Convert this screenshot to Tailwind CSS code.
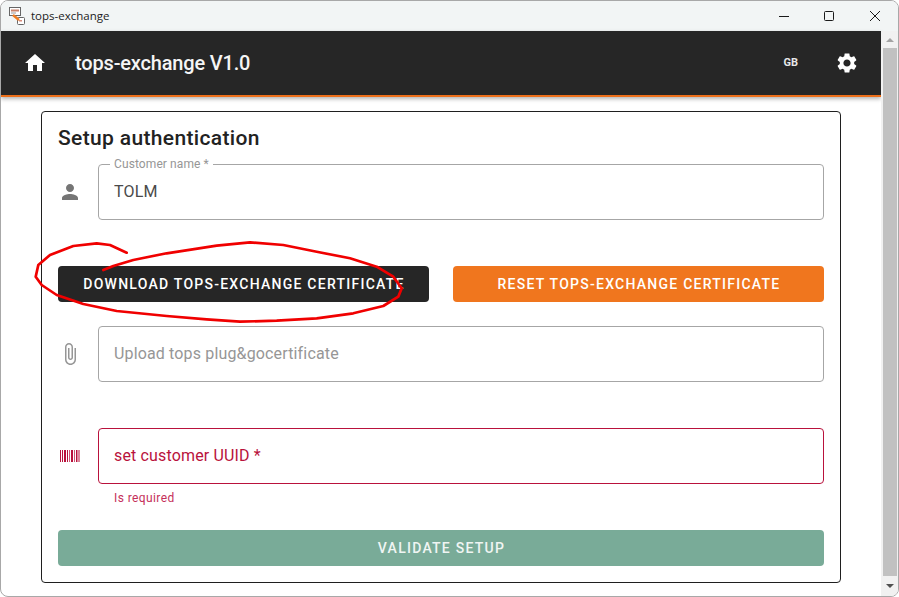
<!DOCTYPE html>
<html lang="en">
<head>
    <meta charset="UTF-8">
    <meta name="viewport" content="width=device-width, initial-scale=1.0">
    <title>tops-exchange</title>
    <script src="https://cdn.jsdelivr.net/npm/@tailwindcss/browser@4"></script>
</head>
<body class="bg-white font-['Roboto',sans-serif]">

    <div class="relative w-[899px] h-[597px] overflow-hidden rounded-[8px] border border-[#a8a8a8] bg-white flex flex-col">

        <!-- Title bar -->
        <div class="h-[30px] shrink-0 flex items-center bg-[#f2f5f5]">
            <svg class="ml-[7px] w-[18px] h-[18px]" viewBox="0 0 18 18">
                <rect x="1.5" y="0.5" width="11" height="8" fill="#fff" stroke="#666"/>
                <rect x="3" y="2.5" width="8" height="2" fill="#c9826a"/>
                <rect x="3" y="5.5" width="5" height="1" fill="#999"/>
                <rect x="9.5" y="10.5" width="7" height="7" rx="1" fill="#fff" stroke="#666"/>
                <rect x="11" y="13" width="3" height="1.5" fill="#d98b7a"/>
                <path d="M5 8l6 5" stroke="#ef7d22" stroke-width="2.4"/>
            </svg>
            <span class="ml-[5px] text-[11.5px] text-[#1c1c1c] font-['Open_Sans',sans-serif]">tops-exchange</span>
            <div class="ml-auto flex items-center mr-[17px]">
                <svg class="w-[12px] h-[12px]" viewBox="0 0 12 12"><path d="M1 6.5h10" stroke="#1a1a1a" stroke-width="1"/></svg>
                <svg class="ml-[33px] w-[12px] h-[12px]" viewBox="0 0 12 12"><rect x="1.5" y="1.5" width="9" height="9" rx="1" fill="none" stroke="#1a1a1a"/></svg>
                <svg class="ml-[34px] w-[12px] h-[12px]" viewBox="0 0 12 12"><path d="M1 1l10 10M11 1L1 11" stroke="#1a1a1a"/></svg>
            </div>
        </div>

        <div class="flex flex-1 min-h-0">
            <div class="w-[880px] flex flex-col">
                <!-- App bar -->
                <header class="h-[66px] shrink-0 flex items-center bg-[#262626] border-b-2 border-[#ec6f1a] shadow-[0_2px_4px_rgba(0,0,0,0.3)]">
                    <svg class="ml-[22px] w-[24px] h-[24px] fill-white" viewBox="0 0 24 24"><path d="M10 20v-6h4v6h5v-8h3L12 3 2 12h3v8z"/></svg>
                    <h1 class="ml-[28px] text-[20px] font-medium tracking-[-0.17px] text-[#f5f5f5]">tops-exchange V1.0</h1>
                    <span class="ml-auto text-[11px] font-bold text-[#e8e8e8]">GB</span>
                    <svg class="ml-[37px] mr-[22px] w-[24px] h-[24px] fill-white" viewBox="0 0 24 24"><path d="M19.14 12.94c.04-.3.06-.61.06-.94 0-.32-.02-.64-.07-.94l2.03-1.58c.18-.14.23-.41.12-.61l-1.92-3.32c-.12-.22-.37-.29-.59-.22l-2.39.96c-.5-.38-1.03-.7-1.62-.94l-.36-2.54c-.04-.24-.24-.41-.48-.41h-3.84c-.24 0-.43.17-.47.41l-.36 2.54c-.59.24-1.13.57-1.62.94l-2.39-.96c-.22-.08-.47 0-.59.22L2.74 8.87c-.12.21-.08.47.12.61l2.03 1.58c-.05.3-.09.63-.09.94s.02.64.07.94l-2.03 1.58c-.18.14-.23.41-.12.61l1.92 3.32c.12.22.37.29.59.22l2.39-.96c.5.38 1.03.7 1.62.94l.36 2.54c.05.24.24.41.48.41h3.84c.24 0 .44-.17.47-.41l.36-2.54c.59-.24 1.13-.56 1.62-.94l2.39.96c.22.08.47 0 .59-.22l1.92-3.32c.12-.22.07-.47-.12-.61l-2.01-1.58zM12 15.6c-1.98 0-3.6-1.62-3.6-3.6s1.62-3.6 3.6-3.6 3.6 1.62 3.6 3.6-1.62 3.6-3.6 3.6z"/></svg>
                </header>

                <!-- Setup card -->
                <main class="ml-[40px] mt-[14px] w-[800px] h-[472px] border border-[#1f1f1f] rounded-[4px] px-[16px] pt-[12px]">
                    <h2 class="text-[21px] leading-[28px] font-medium tracking-[0.35px] text-[#222]">Setup authentication</h2>

                    <div class="mt-[12px] flex items-center">
                        <svg class="w-[24px] h-[24px] mr-[16px] fill-[#757575]" viewBox="0 0 24 24"><path d="M12 12c2.21 0 4-1.79 4-4s-1.79-4-4-4-4 1.79-4 4 1.79 4 4 4zm0 2c-2.67 0-8 1.34-8 4v2h16v-2c0-2.66-5.33-4-8-4z"/></svg>
                        <div class="relative flex-1 h-[56px] border border-[#a6a6a6] rounded-[4px]">
                            <label class="absolute -top-[8px] left-[11px] bg-white px-[4px] text-[12px] leading-[14px] tracking-[0.1px] text-[#969696]">Customer name *</label>
                            <input value="TOLM" class="w-full h-full px-[15px] pb-[2px] text-[16px] tracking-[0.15px] text-[#4a4a4a] outline-none bg-transparent">
                        </div>
                    </div>

                    <div class="mt-[46px] grid grid-cols-2 gap-[24px]">
                        <button class="h-[36px] pl-[1px] rounded-[4px] bg-[#262626] text-white text-[14px] font-medium tracking-[1.25px] uppercase">Download tops-exchange certificate</button>
                        <button class="h-[36px] pl-[1px] rounded-[4px] bg-[#f0761e] text-white text-[14px] font-medium tracking-[1.25px] uppercase">Reset tops-exchange certificate</button>
                    </div>

                    <div class="mt-[24px] flex items-center">
                        <svg class="w-[24px] h-[24px] mr-[16px] fill-[#969696]" viewBox="0 0 24 24"><path d="M16.5 6v11.5c0 2.21-1.79 4-4 4s-4-1.79-4-4V5c0-1.38 1.12-2.5 2.5-2.5s2.5 1.12 2.5 2.5v10.5c0 .55-.45 1-1 1s-1-.45-1-1V6H10v9.5c0 1.38 1.12 2.5 2.5 2.5s2.5-1.12 2.5-2.5V5c0-2.21-1.79-4-4-4S7 2.79 7 5v12.5c0 3.04 2.46 5.5 5.5 5.5s5.5-2.46 5.5-5.5V6h-1.5z"/></svg>
                        <input placeholder="Upload tops plug&amp;gocertificate" class="flex-1 h-[56px] border border-[#a6a6a6] rounded-[4px] px-[15px] pb-[2px] text-[16px] tracking-[0.15px] outline-none placeholder:text-[#969696]">
                    </div>

                    <div class="mt-[46px] flex items-center">
                        <svg class="w-[24px] h-[24px] mr-[16px] fill-[#b9123c]" viewBox="0 0 24 24">
                            <path d="M2 6h1v12H2zM4 6h1v12H4zM6 6h2v12H6zM9 6h1v12H9zM11 6h.7v12H11zM13 6h2v12h-2zM16 6h.7v12H16zM18 6h1.5v12H18zM20.5 6h1v12h-1z"/>
                        </svg>
                        <input placeholder="set customer UUID *" class="flex-1 h-[56px] border border-[#b9123c] rounded-[4px] px-[15px] pb-[2px] text-[16px] tracking-[0.15px] outline-none placeholder:text-[#b9123c]">
                    </div>
                    <p class="ml-[56px] h-[46px] pt-[6px] text-[12px] leading-[16px] tracking-[0.4px] text-[#c5305a]">Is required</p>

                    <button class="w-full h-[36px] pl-[1px] rounded-[4px] bg-[#79ab98] text-[#f0f5f3] text-[14px] font-medium tracking-[1.25px] uppercase">Validate setup</button>
                </main>
            </div>

            <!-- Scrollbar -->
            <div class="w-[17px] bg-[#f1f1f1] flex flex-col items-center">
                <div class="h-[17px] flex items-center justify-center">
                    <div class="w-0 h-0 border-x-[4px] border-x-transparent border-b-[4px] border-b-[#a3a3a3]"></div>
                </div>
                <div class="w-[14px] h-[528px] bg-[#c1c1c1]"></div>
                <div class="flex-1 flex items-center justify-center">
                    <div class="w-0 h-0 border-x-[4px] border-x-transparent border-t-[4px] border-t-[#505050]"></div>
                </div>
            </div>
        </div>

        <!-- Edge of the window behind -->
        <div class="absolute left-[-1px] top-[38px] w-[1px] h-[557px] flex flex-col">
            <div class="h-[124px] bg-[#c2763a]"></div>
            <div class="h-[20px] bg-[#b5b5b5]"></div>
            <div class="h-[90px] bg-[#c2763a]"></div>
            <div class="h-[153px] bg-[#ababab]"></div>
            <div class="h-[67px] bg-[#444]"></div>
            <div class="h-[2px] bg-[#c2763a]"></div>
            <div class="flex-1 bg-[#ababab]"></div>
        </div>

        <!-- Red marker scribble -->
        <svg class="absolute left-[-1px] top-[-1px] w-[899px] h-[597px] pointer-events-none" viewBox="0 0 899 597">
            <polyline fill="none" stroke="#f00000" stroke-width="2.7" stroke-linejoin="round" stroke-linecap="round" points="126.7,252.7 110,245 96.7,243.3 73.3,246 50,255 38.3,265 35.7,276.7 41.7,285 56.7,295 83.3,304 116.7,311 166.7,316 206.7,319.3 240,321.7 276.7,320.7 316.7,318.3 353.3,313.3 383.3,306 398.3,296.7 401.7,288.3 393.3,276.7 376.7,266.7 350,258.3 316.7,251.7 283.3,245 250,242.3 216.7,245.7 166.7,253.3 133.3,260 113.3,266 103.3,270"/>
        </svg>
    </div>

</body>
</html>
